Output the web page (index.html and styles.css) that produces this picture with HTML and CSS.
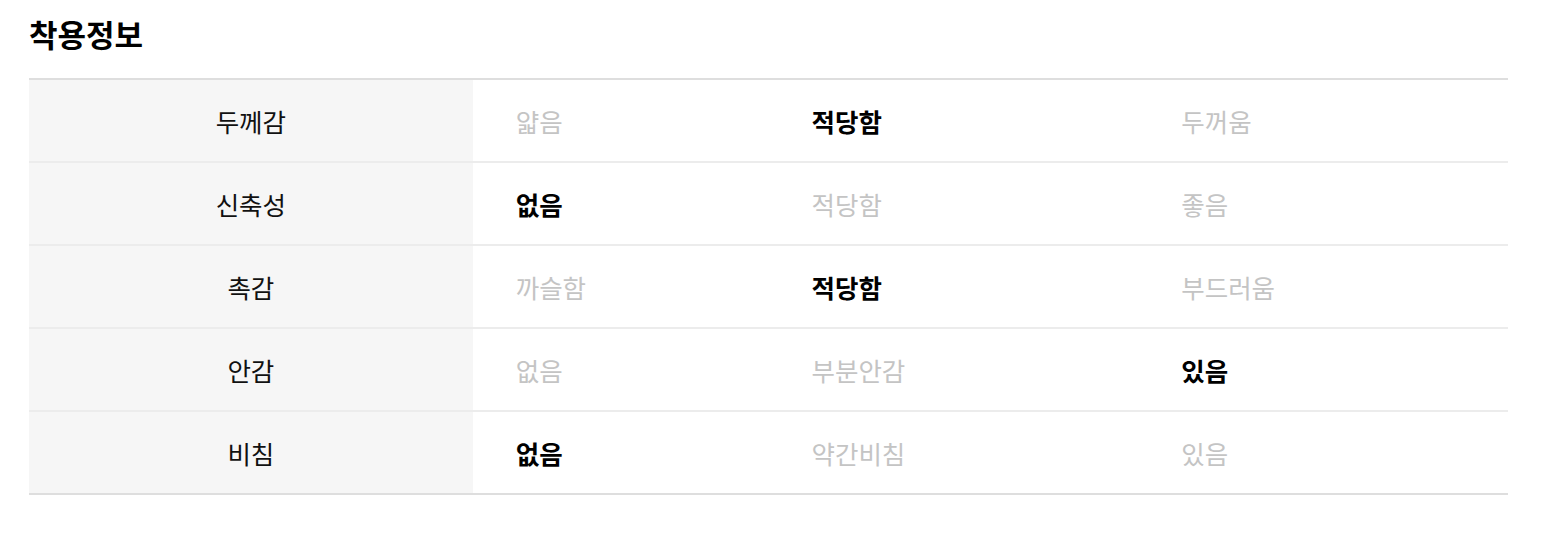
FILE: index.html
```
<!DOCTYPE html>
<html lang="ko">
<head>
<meta charset="utf-8">
<link rel="stylesheet" href="styles.css">
</head>
<body>
<section class="wear">
  <h2 class="wear-title">착용정보</h2>
  <table class="wear-table">
    <colgroup>
      <col class="c1"><col class="c2"><col class="c3"><col class="c4">
    </colgroup>
    <tbody>
      <tr><th>두께감</th><td>얇음</td><td class="on">적당함</td><td>두꺼움</td></tr>
      <tr><th>신축성</th><td class="on">없음</td><td>적당함</td><td>좋음</td></tr>
      <tr><th>촉감</th><td>까슬함</td><td class="on">적당함</td><td>부드러움</td></tr>
      <tr><th>안감</th><td>없음</td><td>부분안감</td><td class="on">있음</td></tr>
      <tr><th>비침</th><td class="on">없음</td><td>약간비침</td><td>있음</td></tr>
    </tbody>
  </table>
</section>
</body>
</html>
```
FILE: styles.css
```
html, body {
  margin: 0;
  padding: 0;
  background: #fff;
}
body {
  font-family: "Noto Sans CJK KR", "Noto Sans", sans-serif;
  color: #000;
}
.wear {
  padding: 12px 37px 0 29px;
}
.wear-title {
  margin: 0;
  font-size: 31px;
  font-weight: 700;
  line-height: 44px;
}
.wear-table {
  margin-top: 22px;
  width: 100%;
  border-collapse: collapse;
  table-layout: fixed;
  border-top: 2px solid #dedede;
  border-bottom: 2px solid #dedede;
}
.c1 { width: 30%; }
.c2 { width: 20%; }
.c3 { width: 25%; }
.c4 { width: 25%; }
.wear-table tr + tr th,
.wear-table tr + tr td {
  border-top: 2px solid #ececec;
}
.wear-table th,
.wear-table td {
  height: 81px;
  padding: 0 0 0 43px;
  font-size: 25.5px;
  line-height: 32px;
  vertical-align: middle;
  text-align: left;
}
.wear-table th {
  background: #f6f6f6;
  font-weight: 400;
  color: #111;
  text-align: center;
  padding: 0;
}
.wear-table td {
  color: #c4c4c4;
  font-weight: 400;
}
.wear-table td.on {
  color: #000;
  font-weight: 700;
}
```
